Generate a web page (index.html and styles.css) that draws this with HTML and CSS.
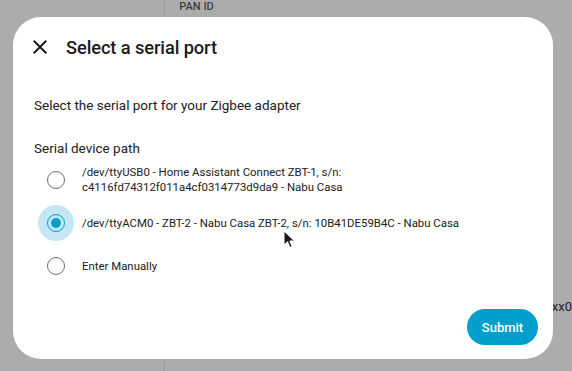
FILE: index.html
```html
<!DOCTYPE html>
<html>
<head>
<meta charset="utf-8">
<link rel="stylesheet" href="styles.css">
</head>
<body>
<div class="page">
  <div class="page-left"></div>
  <div class="page-right">
    <div class="col-head">PAN ID</div>
    <div class="col-value">xxx0</div>
  </div>
</div>

<div class="dialog">
  <div class="dialog-header">
    <svg class="close" viewBox="0 0 24 24" width="24" height="24"><path d="M19,6.41L17.59,5L12,10.59L6.41,5L5,6.41L10.59,12L5,17.59L6.41,19L12,13.41L17.59,19L19,17.59L13.41,12L19,6.41Z" fill="#1c1c1c"/></svg>
    <h2 class="title">Select a serial port</h2>
  </div>
  <div class="dialog-body">
    <p class="desc">Select the serial port for your Zigbee adapter</p>
    <div class="field-label">Serial device path</div>
    <div class="options">
      <div class="option">
        <span class="radio"><span class="ring"></span></span>
        <span class="opt-text">/dev/ttyUSB0 - Home Assistant Connect ZBT-1, s/n:<br>c4116fd74312f011a4cf0314773d9da9 - Nabu Casa</span>
      </div>
      <div class="option">
        <span class="radio checked"><span class="ring"><span class="dot"></span></span></span>
        <span class="opt-text">/dev/ttyACM0 - ZBT-2 - Nabu Casa ZBT-2, s/n: 10B41DE59B4C - Nabu Casa</span>
      </div>
      <div class="option">
        <span class="radio"><span class="ring"></span></span>
        <span class="opt-text">Enter Manually</span>
      </div>
    </div>
  </div>
  <div class="dialog-actions">
    <button class="submit">Submit</button>
  </div>
</div>

<svg class="cursor" width="14" height="20" viewBox="0 0 14 20"><path d="M1,1 L1,15 L4.5,11.8 L7,17.5 L9.2,16.5 L6.8,11 L11.5,11 Z" fill="#1a1a1a" stroke="#ffffff" stroke-width="1"/></svg>
</body>
</html>
```
FILE: styles.css
```css
html, body {
  margin: 0;
  padding: 0;
}
body {
  width: 572px;
  height: 371px;
  overflow: hidden;
  background: #acacac;
  font-family: Roboto, "Liberation Sans", sans-serif;
  position: relative;
}
.page {
  display: flex;
  height: 371px;
}
.page-left {
  width: 168px;
  border-right: 1px solid #9d9d9d;
}
.page-right {
  flex: 1;
  display: flex;
  flex-direction: column;
  padding-left: 14px;
}
.col-head {
  font-size: 11px;
  font-weight: 500;
  color: #3c3f47;
  margin-top: 1px;
  line-height: 12px;
}
.col-value {
  margin-top: 286px;
  margin-left: 366px;
  font-size: 13px;
  color: #1e1e1e;
  white-space: nowrap;
}
.dialog {
  position: absolute;
  left: 13px;
  top: 17px;
  width: 540px;
  height: 342px;
  background: #ffffff;
  border-radius: 28px;
  display: flex;
  flex-direction: column;
  box-sizing: border-box;
}
.dialog-header {
  display: flex;
  align-items: center;
  padding: 18px 0 0 15px;
  height: 24px;
}
.close {
  display: block;
  width: 24px;
  height: 24px;
}
.title {
  margin: 0 0 0 14px;
  font-size: 18.3px;
  font-weight: 500;
  color: #1b1b1b;
  letter-spacing: -0.1px;
}
.dialog-body {
  padding: 0 0 0 21px;
  flex: 1;
}
.desc {
  margin: 37px 0 0 0;
  font-size: 13.5px;
  color: #212121;
  line-height: 18px;
}
.field-label {
  margin-top: 25px;
  font-size: 13.5px;
  color: #212121;
  line-height: 18px;
}
.options {
  display: flex;
  flex-direction: column;
  margin-top: 5px;
}
.option {
  display: flex;
  align-items: center;
  min-height: 36px;
  margin-bottom: 7px;
}
.radio {
  width: 36px;
  height: 36px;
  border-radius: 50%;
  display: flex;
  align-items: center;
  justify-content: center;
  flex: none;
  margin-left: 4px;
}
.radio.checked {
  background: #c5e7f3;
}
.ring {
  width: 16px;
  height: 16px;
  border: 1px solid #6f6f6f;
  border-radius: 50%;
  display: flex;
  align-items: center;
  justify-content: center;
  box-sizing: content-box;
}
.radio.checked .ring {
  border-color: #039fcc;
}
.dot {
  width: 10px;
  height: 10px;
  border-radius: 50%;
  background: #039fcc;
}
.opt-text {
  margin-left: 8px;
  font-size: 11.4px;
  line-height: 15px;
  color: #212121;
}
.dialog-actions {
  display: flex;
  justify-content: flex-end;
  padding: 0 15px 14px 0;
}
.submit {
  height: 36px;
  width: 71px;
  border: none;
  border-radius: 18px;
  background: #039fcc;
  color: #ffffff;
  font-family: Roboto, "Liberation Sans", sans-serif;
  font-size: 13px;
  font-weight: 500;
  padding: 0;
}
.cursor {
  position: absolute;
  left: 283px;
  top: 230px;
}
```
